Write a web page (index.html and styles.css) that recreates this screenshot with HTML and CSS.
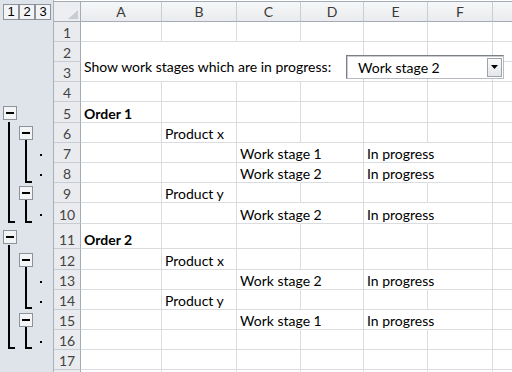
FILE: index.html
```html
<!DOCTYPE html>
<html>
<head>
<meta charset="utf-8">
<link rel="stylesheet" href="styles.css">
</head>
<body>
<div class="app">
  <div class="gutter">
    <div class="levels"><span class="lvl">1</span><span class="lvl">2</span><span class="lvl">3</span></div>
    <svg class="outline" width="53" height="350" viewBox="0 22 53 350">
      <g fill="#f3f4f6" stroke="#8d9199" stroke-width="1">
        <rect x="3.5" y="106.5" width="13" height="13"/>
        <rect x="19.5" y="126.5" width="13" height="13"/>
        <rect x="19.5" y="186.5" width="13" height="13"/>
        <rect x="3.5" y="230.5" width="13" height="13"/>
        <rect x="19.5" y="253.5" width="13" height="13"/>
        <rect x="19.5" y="313.5" width="13" height="13"/>
      </g>
      <g fill="none" stroke="#000" stroke-width="2">
        <path d="M6 113h8M22 133h8M22 193h8M6 237h8M22 260h8M22 320h8"/>
        <path d="M9 122V222H15"/>
        <path d="M26 140V182H32"/>
        <path d="M26 200V222H32"/>
        <path d="M9 245V348H15"/>
        <path d="M26 267V308H32"/>
        <path d="M26 327V348H32"/>
      </g>
      <g fill="#000">
        <rect x="40" y="154" width="2" height="2"/>
        <rect x="40" y="174" width="2" height="2"/>
        <rect x="40" y="214" width="2" height="2"/>
        <rect x="40" y="281" width="2" height="2"/>
        <rect x="40" y="301" width="2" height="2"/>
        <rect x="40" y="341" width="2" height="2"/>
      </g>
    </svg>
  </div>
  <div class="sheet">
    <div class="corner"><svg width="10" height="9" viewBox="0 0 10 9"><path d="M10 0V9H0Z" fill="#c9cdd3"/></svg></div>
    <div class="ch">A</div><div class="ch">B</div><div class="ch">C</div><div class="ch">D</div><div class="ch">E</div><div class="ch">F</div><div class="ch"></div>

    <div class="rh">1</div><div class="c"></div><div class="c"></div><div class="c"></div><div class="c"></div><div class="c"></div><div class="c"></div><div class="c"></div>

    <div class="rh">2</div><div class="c merged">Show work stages which are in progress:</div><div class="c"></div><div class="c"></div><div class="c"></div>
    <div class="rh">3</div><div class="c"></div><div class="c"></div><div class="c"></div>

    <div class="rh">4</div><div class="c"></div><div class="c"></div><div class="c"></div><div class="c"></div><div class="c"></div><div class="c"></div><div class="c"></div>

    <div class="rh">5</div><div class="c b">Order 1</div><div class="c"></div><div class="c"></div><div class="c"></div><div class="c"></div><div class="c"></div><div class="c"></div>

    <div class="rh">6</div><div class="c"></div><div class="c">Product x</div><div class="c"></div><div class="c"></div><div class="c"></div><div class="c"></div><div class="c"></div>

    <div class="rh">7</div><div class="c"></div><div class="c"></div><div class="c ov">Work stage 1</div><div class="c"></div><div class="c ov">In progress</div><div class="c"></div><div class="c"></div>

    <div class="rh">8</div><div class="c"></div><div class="c"></div><div class="c ov">Work stage 2</div><div class="c"></div><div class="c ov">In progress</div><div class="c"></div><div class="c"></div>

    <div class="rh">9</div><div class="c"></div><div class="c">Product y</div><div class="c"></div><div class="c"></div><div class="c"></div><div class="c"></div><div class="c"></div>

    <div class="rh">10</div><div class="c"></div><div class="c"></div><div class="c ov">Work stage 2</div><div class="c"></div><div class="c ov">In progress</div><div class="c"></div><div class="c"></div>

    <div class="rh">11</div><div class="c b">Order 2</div><div class="c"></div><div class="c"></div><div class="c"></div><div class="c"></div><div class="c"></div><div class="c"></div>

    <div class="rh">12</div><div class="c"></div><div class="c">Product x</div><div class="c"></div><div class="c"></div><div class="c"></div><div class="c"></div><div class="c"></div>

    <div class="rh">13</div><div class="c"></div><div class="c"></div><div class="c ov">Work stage 2</div><div class="c"></div><div class="c ov">In progress</div><div class="c"></div><div class="c"></div>

    <div class="rh">14</div><div class="c"></div><div class="c">Product y</div><div class="c"></div><div class="c"></div><div class="c"></div><div class="c"></div><div class="c"></div>

    <div class="rh">15</div><div class="c"></div><div class="c"></div><div class="c ov">Work stage 1</div><div class="c"></div><div class="c ov">In progress</div><div class="c"></div><div class="c"></div>

    <div class="rh">16</div><div class="c"></div><div class="c"></div><div class="c"></div><div class="c"></div><div class="c"></div><div class="c"></div><div class="c"></div>

    <div class="rh">17</div><div class="c"></div><div class="c"></div><div class="c"></div><div class="c"></div><div class="c"></div><div class="c"></div><div class="c"></div>

    <div class="rh"></div><div class="c"></div><div class="c"></div><div class="c"></div><div class="c"></div><div class="c"></div><div class="c"></div><div class="c"></div>

    <div class="combo">
      <span class="combo-text">Work stage 2</span>
      <span class="combo-btn"><svg width="7" height="4" viewBox="0 0 7 4"><path d="M0 0H7L3.5 4Z" fill="#000"/></svg></span>
    </div>
  </div>
</div>
</body>
</html>
```

FILE: styles.css
```css
* { box-sizing: border-box; }
html, body { margin: 0; padding: 0; }
body {
  width: 512px;
  height: 372px;
  overflow: hidden;
  background: #fff;
  font-family: "Lato", "Liberation Sans", sans-serif;
}
.app {
  display: flex;
  width: 512px;
  height: 372px;
  overflow: hidden;
}
.gutter {
  flex: 0 0 53px;
  background: #dfe3ea;
  border-right: 1px solid #a9b1bc;
  display: flex;
  flex-direction: column;
}
.levels {
  height: 22px;
  display: flex;
  padding: 4px 0 0 3px;
}
.lvl {
  width: 16px;
  height: 16px;
  border: 1px solid #8d9199;
  background: #f3f4f6;
  font: 13px/14px "Liberation Sans", sans-serif;
  color: #000;
  text-align: center;
}
.outline { display: block; }

.sheet {
  position: relative;
  flex: 1 1 auto;
  padding-top: 1px;
  background: #fff;
  display: grid;
  grid-template-columns: 27px 81px 75px 64px 63px 64px 65px 64px;
  grid-template-rows: 21px repeat(4, 20px) 21px repeat(4, 20px) 21px 25px 21px repeat(6, 20px);
  align-content: start;
}
.corner, .ch {
  background: linear-gradient(#f6f7f8, #e9ebee);
  border-top: 1px solid #a3abb5;
  border-bottom: 1px solid #a3abb5;
  border-right: 1px solid #c8cdd4;
  color: #3a3a3a;
  font-size: 14px;
  display: flex;
  align-items: center;
  justify-content: center;
}
.corner {
  justify-content: flex-end;
  align-items: flex-end;
  padding: 0 2px 2px 0;
  border-right-color: #a3abb5;
  background: #eceef1;
}
.corner svg { display: block; }
.rh {
  background: #e9ebee;
  border-right: 1px solid #a3abb5;
  border-bottom: 1px solid #c8cdd4;
  color: #444;
  font-size: 14px;
  display: flex;
  align-items: flex-end;
  justify-content: center;
  line-height: 17px;
}
.c {
  border-right: 1px solid #dadcdf;
  border-bottom: 1px solid #dadcdf;
  display: flex;
  align-items: flex-end;
  padding: 0 3px 0;
  white-space: nowrap;
  font-size: 14px;
  line-height: 17px;
  color: #000;
  min-width: 0;
}
.c.b { font-weight: bold; }
.c.ov { border-right-color: transparent; }
.c.merged {
  grid-column: span 4;
  grid-row: span 2;
  align-items: center;
  padding-top: 9px;
}
.combo {
  position: absolute;
  left: 292px;
  top: 55px;
  width: 158px;
  height: 24px;
  background: #fff;
  border: 1px solid #7b7f86;
  border-right-color: #b8bcc2;
  border-bottom-color: #b8bcc2;
  box-shadow: inset 1px 1px 0 #c9ccd1;
  display: flex;
  align-items: center;
  padding-left: 11px;
}
.combo-text {
  flex: 1 1 auto;
  font-size: 14px;
  color: #000;
  white-space: nowrap;
}
.combo-btn {
  flex: 0 0 15px;
  height: 19px;
  margin-right: 1px;
  border: 1px solid #9ea3aa;
  background: linear-gradient(#fafafa, #e4e6e9);
  display: flex;
  align-items: center;
  justify-content: center;
}
.combo-btn svg { display: block; }
```
